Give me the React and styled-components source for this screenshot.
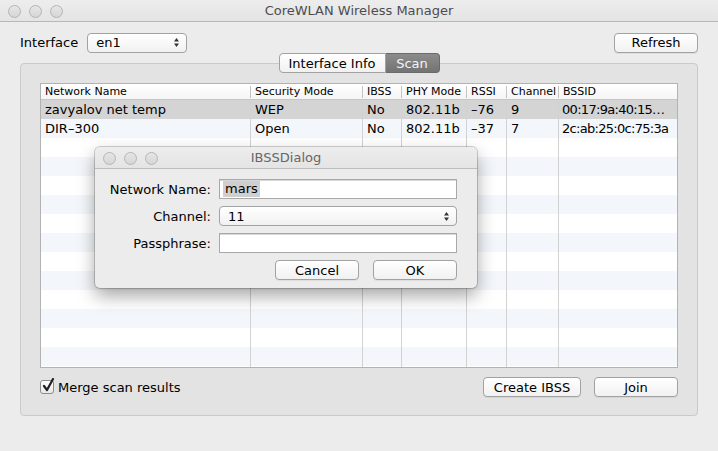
import React from 'react';
import styled, { createGlobalStyle } from 'styled-components';

const GlobalStyle = createGlobalStyle`
  html, body {
    margin: 0;
    padding: 0;
    background: #ececec;
    font-family: "DejaVu Sans", "Liberation Sans", sans-serif;
    font-size: 13px;
    color: #000;
  }
`;

const columns = [
  { title: 'Network Name', width: 210 },
  { title: 'Security Mode', width: 112 },
  { title: 'IBSS', width: 39 },
  { title: 'PHY Mode', width: 65 },
  { title: 'RSSI', width: 40 },
  { title: 'Channel', width: 52 },
  { title: 'BSSID', width: 118, tight: true },
];

const networks = [
  ['zavyalov net temp', 'WEP', 'No', '802.11b', '\u201376', '9', '00:17:9a:40:15…'],
  ['DIR\u2013300', 'Open', 'No', '802.11b', '\u201337', '7', '2c:ab:25:0c:75:3a'],
];

const Window = styled.div`
  position: relative;
  width: 718px;
  height: 451px;
  display: flex;
  flex-direction: column;
  background: #ececec;
  overflow: hidden;
`;

const TitleBar = styled.div`
  height: 21px;
  flex: none;
  display: flex;
  align-items: center;
  justify-content: center;
  position: relative;
  background: linear-gradient(#ededed, #e4e4e4);
  border-bottom: 1px solid #b8b8b8;
`;

const Lights = styled.div`
  position: absolute;
  left: 8px;
  top: 5px;
  display: flex;
  gap: 8px;
`;

const Light = styled.span`
  width: 11px;
  height: 11px;
  border-radius: 50%;
  border: 1px solid #b4b4b4;
  background: linear-gradient(#e6e6e6, #d6d6d6);
`;

const Title = styled.div`
  font-size: 13px;
  color: #4d4d4d;
`;

const Content = styled.div`
  padding: 10px 20px 0;
  display: flex;
  flex-direction: column;
`;

const TopRow = styled.div`
  height: 21px;
  display: flex;
  align-items: center;
`;

const Label = styled.span`
  font-size: 13px;
  margin-right: 9px;
`;

const Button = styled.button`
  height: 20px;
  width: ${p => p.$w}px;
  padding: 0;
  border: 1px solid #a2a2a2;
  border-radius: 4px;
  background: linear-gradient(#ffffff, #f1f1f1);
  box-shadow: 0 1px 0 rgba(0, 0, 0, 0.06);
  font-family: inherit;
  font-size: 13px;
  color: #000;
  display: flex;
  align-items: center;
  justify-content: center;
`;

const Popup = styled.div`
  height: 20px;
  width: ${p => p.$w}px;
  box-sizing: border-box;
  border: 1px solid #a2a2a2;
  border-radius: 4px;
  background: linear-gradient(#ffffff, #f1f1f1);
  display: flex;
  align-items: center;
  justify-content: space-between;
  padding: 0 6px 0 8px;
  font-size: 13px;
`;

const Spacer = styled.div`
  flex: 1;
`;

const TabsRow = styled.div`
  display: flex;
  justify-content: center;
  position: relative;
  z-index: 1;
`;

const Tab = styled.div`
  height: 20px;
  box-sizing: border-box;
  width: ${p => p.$w}px;
  display: flex;
  align-items: center;
  justify-content: center;
  font-size: 13px;
  border: 1px solid ${p => (p.$active ? '#6a6a6a' : '#a2a2a2')};
  background: ${p => (p.$active ? 'linear-gradient(#8c8c8c, #737373)' : 'linear-gradient(#ffffff, #f1f1f1)')};
  color: ${p => (p.$active ? '#f4f4f4' : '#000')};
  border-radius: ${p => (p.$first ? '4px 0 0 4px' : '0 4px 4px 0')};
  ${p => !p.$first && 'border-left: none;'}
`;

const GroupBox = styled.div`
  margin-top: -10px;
  height: 353px;
  box-sizing: border-box;
  border: 1px solid #cacaca;
  border-radius: 4px;
  background: #e3e3e3;
  padding: 19px 19px 0 19px;
  display: flex;
  flex-direction: column;
`;

const Table = styled.div`
  height: 285px;
  box-sizing: border-box;
  border: 1px solid #b2b2b2;
  background: #fff;
  overflow: hidden;
  display: flex;
  flex-direction: column;
`;

const HeaderRow = styled.div`
  display: flex;
  height: 15px;
  flex: none;
  border-bottom: 1px solid #c6c6c6;
  background: linear-gradient(#ffffff, #f5f5f5);
`;

const HeaderCell = styled.div`
  width: ${p => p.$w}px;
  flex: none;
  box-sizing: border-box;
  padding-left: 4px;
  font-size: 11px;
  line-height: 15px;
  white-space: nowrap;
  overflow: hidden;
  position: relative;
  &:not(:last-child)::after {
    content: '';
    position: absolute;
    right: 0;
    top: 2px;
    bottom: 1px;
    width: 1px;
    background: #c4c4c4;
  }
`;

const Row = styled.div`
  display: flex;
  height: 19px;
  flex: none;
  background: ${p => (p.$selected ? '#d4d4d4' : p.$odd ? '#f3f6fa' : '#ffffff')};
`;

const Cell = styled.div`
  width: ${p => p.$w}px;
  flex: none;
  box-sizing: border-box;
  padding-left: ${p => (p.$tight ? 3 : 4)}px;
  line-height: 19px;
  font-size: 13px;
  letter-spacing: ${p => (p.$tight ? '-0.7px' : 'normal')};
  white-space: nowrap;
  overflow: hidden;
  &:not(:last-child) {
    border-right: 1px solid #d2d2d2;
  }
`;

const BottomRow = styled.div`
  display: flex;
  align-items: center;
  margin-top: 9px;
  height: 20px;
  gap: 13px;
`;

const CheckWrap = styled.label`
  display: flex;
  align-items: center;
  gap: 4px;
  font-size: 13px;
  flex: 1;
`;

const CheckBox = styled.span`
  width: 14px;
  height: 14px;
  box-sizing: border-box;
  border: 1px solid #8c8c8c;
  border-radius: 3px;
  background: linear-gradient(#ffffff, #e8e8e8);
  position: relative;
  svg {
    position: absolute;
    left: 1px;
    top: -3px;
  }
`;

const Dialog = styled.div`
  position: absolute;
  left: 95px;
  top: 147px;
  width: 382px;
  height: 141px;
  border-radius: 5px;
  background: #ececec;
  box-shadow: 0 0 0 1px rgba(0, 0, 0, 0.18), 0 8px 18px rgba(0, 0, 0, 0.35);
  overflow: hidden;
  display: flex;
  flex-direction: column;
`;

const DialogTitleBar = styled(TitleBar)`
  border-bottom-color: #bdbdbd;
`;

const DialogTitle = styled(Title)`
  color: #666;
`;

const DialogForm = styled.div`
  display: grid;
  grid-template-columns: 116px 238px;
  column-gap: 8px;
  row-gap: 7px;
  padding-top: 10px;
  align-items: center;
`;

const FormLabel = styled.div`
  text-align: right;
  font-size: 13px;
`;

const TextField = styled.div`
  height: 20px;
  box-sizing: border-box;
  border: 1px solid #a8a8a8;
  background: #fff;
  box-shadow: inset 0 1px 0 #d8d8d8;
  display: flex;
  align-items: center;
  padding-left: 3px;
  font-size: 13px;
`;

const Selection = styled.span`
  background: #cfcfcf;
  padding: 0 2px 1px;
`;

const DialogButtons = styled.div`
  grid-column: 2;
  display: flex;
  justify-content: flex-end;
  gap: 14px;
`;

function Arrows() {
  return (
    <svg width="7" height="11" viewBox="0 0 7 11">
      <path d="M3.5 1 L6 4.5 H1 Z" fill="#333" />
      <path d="M3.5 10 L6 6.5 H1 Z" fill="#333" />
    </svg>
  );
}

function TrafficLights() {
  return (
    <Lights>
      <Light />
      <Light />
      <Light />
    </Lights>
  );
}

export default function App() {
  const rows = Array.from({ length: 15 }, (_, i) => networks[i] || null);
  return (
    <Window>
      <GlobalStyle />
      <TitleBar>
        <TrafficLights />
        <Title>CoreWLAN Wireless Manager</Title>
      </TitleBar>
      <Content>
        <TopRow>
          <Label>Interface</Label>
          <Popup $w={100}>
            <span>en1</span>
            <Arrows />
          </Popup>
          <Spacer />
          <Button $w={84}>Refresh</Button>
        </TopRow>
        <TabsRow>
          <Tab $first $w={107}>Interface Info</Tab>
          <Tab $active $w={54}>Scan</Tab>
        </TabsRow>
        <GroupBox>
          <Table>
            <HeaderRow>
              {columns.map(c => (
                <HeaderCell key={c.title} $w={c.width}>{c.title}</HeaderCell>
              ))}
            </HeaderRow>
            {rows.map((r, i) => (
              <Row key={i} $selected={i === 0} $odd={i % 2 === 1}>
                {columns.map((c, j) => (
                  <Cell key={c.title} $w={c.width} $tight={c.tight}>{r ? r[j] : ''}</Cell>
                ))}
              </Row>
            ))}
          </Table>
          <BottomRow>
            <CheckWrap>
              <CheckBox>
                <svg width="13" height="14" viewBox="0 0 13 14">
                  <path d="M2 8 L5 12 L11 1" fill="none" stroke="#222" strokeWidth="2.2" strokeLinecap="round" strokeLinejoin="round" />
                </svg>
              </CheckBox>
              Merge scan results
            </CheckWrap>
            <Button $w={98}>Create IBSS</Button>
            <Button $w={84}>Join</Button>
          </BottomRow>
        </GroupBox>
      </Content>

      <Dialog>
        <DialogTitleBar>
          <TrafficLights />
          <DialogTitle>IBSSDialog</DialogTitle>
        </DialogTitleBar>
        <DialogForm>
          <FormLabel>Network Name:</FormLabel>
          <TextField>
            <Selection>mars</Selection>
          </TextField>
          <FormLabel>Channel:</FormLabel>
          <Popup $w={238}>
            <span>11</span>
            <Arrows />
          </Popup>
          <FormLabel>Passphrase:</FormLabel>
          <TextField />
          <DialogButtons>
            <Button $w={84}>Cancel</Button>
            <Button $w={84}>OK</Button>
          </DialogButtons>
        </DialogForm>
      </Dialog>
    </Window>
  );
}
